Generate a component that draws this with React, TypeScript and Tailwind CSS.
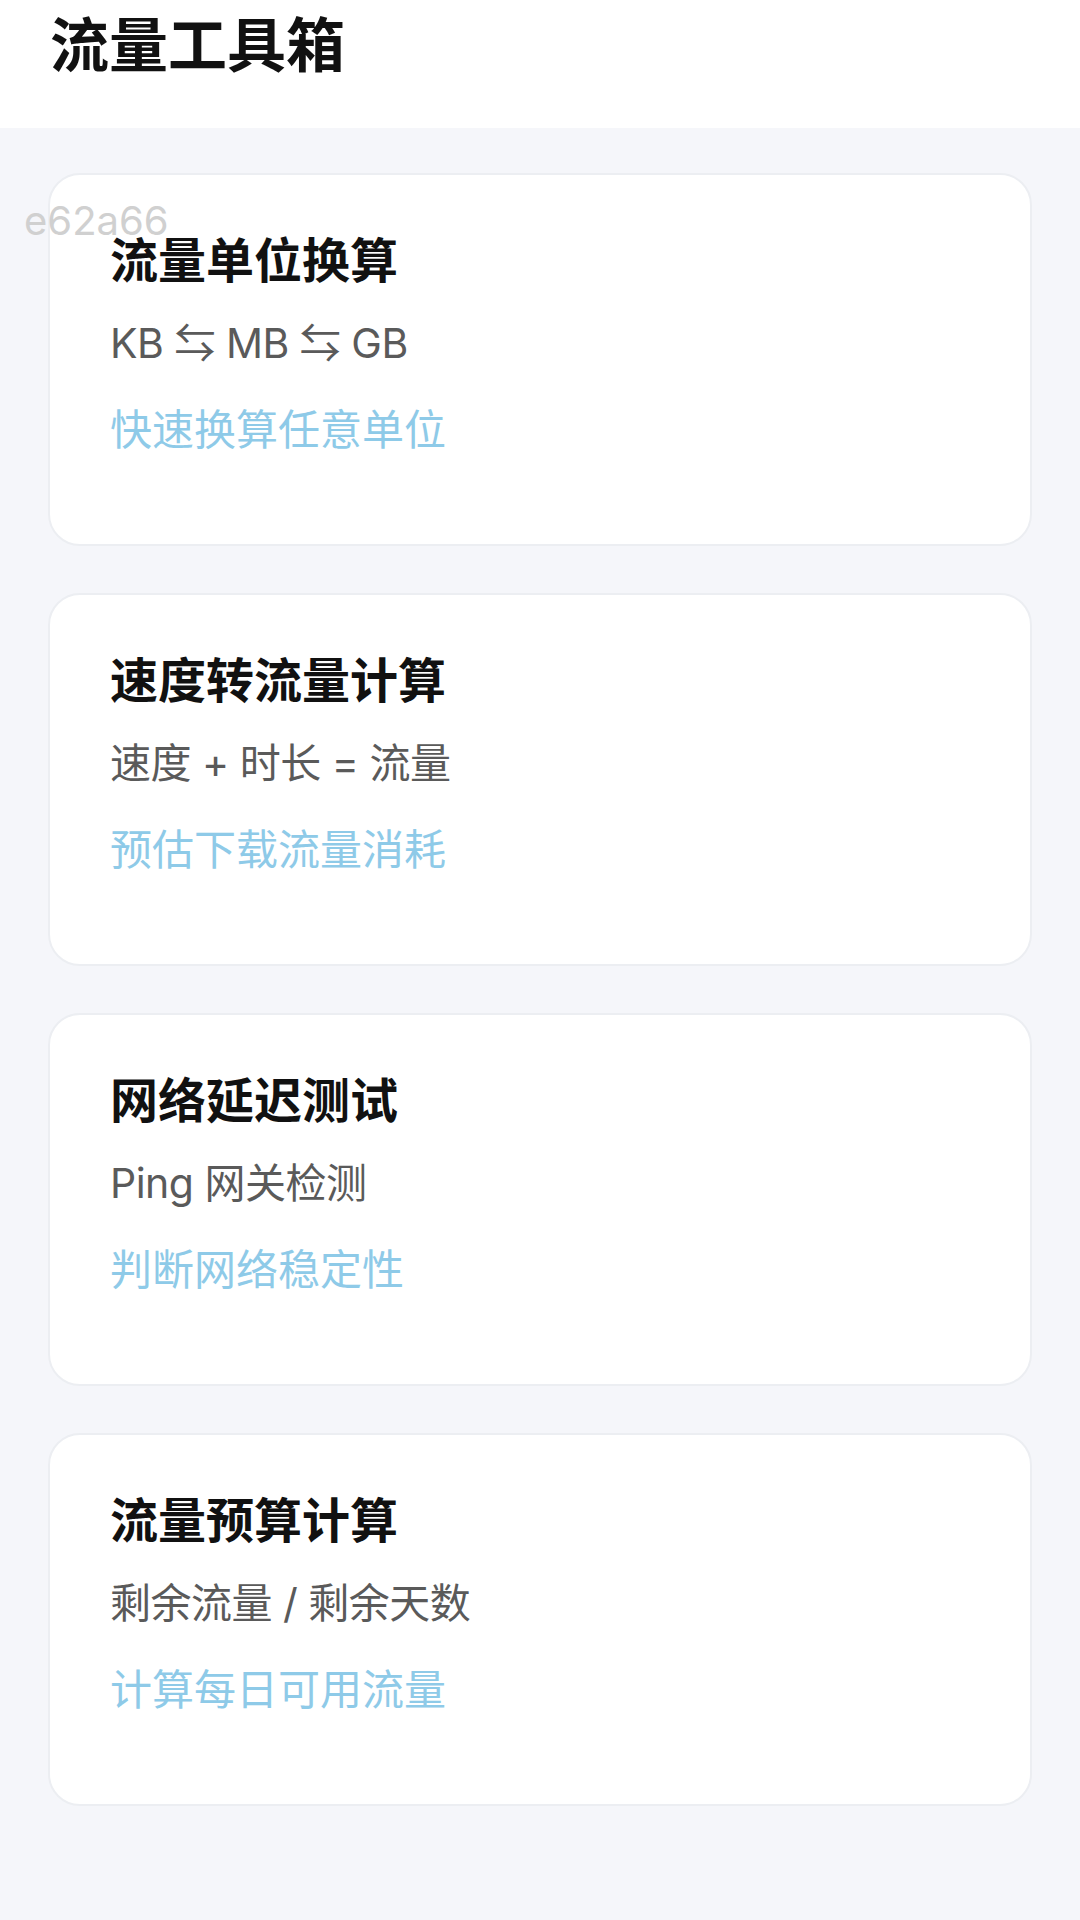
const tools = [
  { title: '流量单位换算', desc: 'KB ⇆ MB ⇆ GB', hint: '快速换算任意单位' },
  { title: '速度转流量计算', desc: '速度 + 时长 = 流量', hint: '预估下载流量消耗' },
  { title: '网络延迟测试', desc: 'Ping 网关检测', hint: '判断网络稳定性' },
  { title: '流量预算计算', desc: '剩余流量 / 剩余天数', hint: '计算每日可用流量' },
];

function ToolCard({ title, desc, hint }: { title: string; desc: string; hint: string }) {
  return (
    <div className="h-[373px] rounded-[32px] border-2 border-[#eceef2] bg-white pl-[60px] pt-[56px]">
      <div className="text-[48px] font-bold leading-[60px] text-[#111111]">{title}</div>
      <div className="mt-[22px] text-[41px] leading-[60px] tracking-[-0.5px] text-[#5a5a5a]">{desc}</div>
      <div className="mt-[27px] text-[42px] leading-[60px] text-[#8ecae8]">{hint}</div>
    </div>
  );
}

export default function App() {
  return (
    <div
      className="relative min-h-[1920px] w-[1080px] bg-[#f5f6fa]"
      style={{ fontFamily: 'Inter, "Noto Sans CJK SC", "DejaVu Sans", sans-serif' }}
    >
      {/* header */}
      <div className="h-[128px] bg-white pl-[50px] pt-[14px]">
        <h1 className="text-[59px] font-bold leading-[64px] text-[#111111]">流量工具箱</h1>
      </div>

      {/* tool list */}
      <div className="flex flex-col gap-[47px] px-[48px] pt-[45px]">
        {tools.map(t => (
          <ToolCard key={t.title} {...t} />
        ))}
      </div>

      {/* build watermark */}
      <span className="absolute left-[24px] top-[204px] text-[40px] leading-[34px] text-[#d0d0d0]">e62a66</span>
    </div>
  );
}
